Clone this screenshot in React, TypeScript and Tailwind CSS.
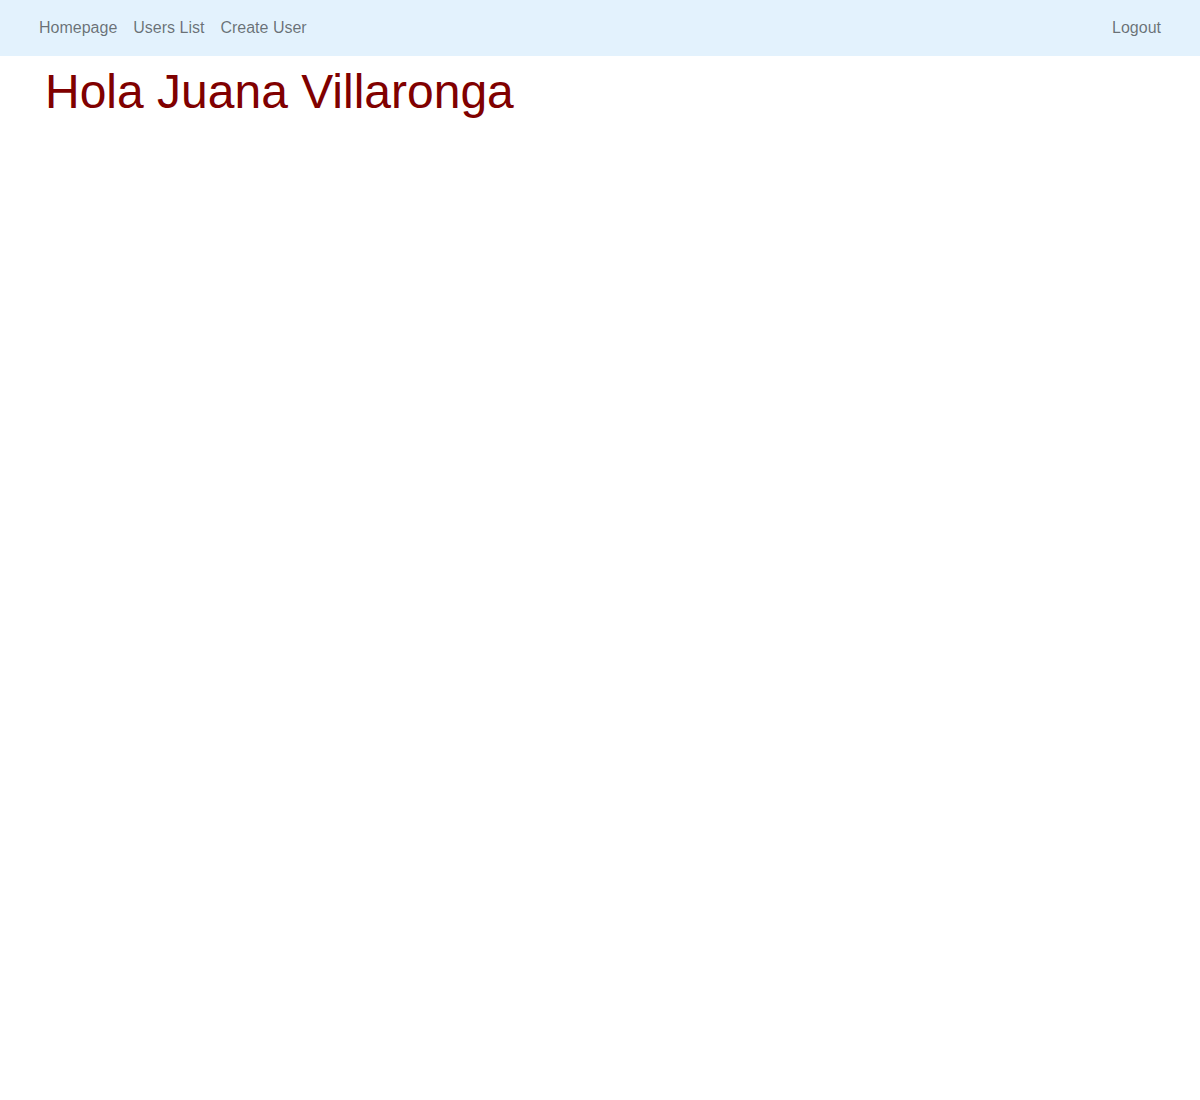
export default function App() {
  return (
    <div className="min-h-screen bg-white font-['Liberation_Sans',Arial,sans-serif]">
      <nav className="h-14 bg-[#e3f2fd] flex items-center justify-between pl-[31px] pr-[31px]">
        <ul className="flex">
          <li><a href="#" className="block px-2 text-base text-[rgba(0,0,0,0.55)]">Homepage</a></li>
          <li><a href="#" className="block px-2 text-base text-[rgba(0,0,0,0.55)]">Users List</a></li>
          <li><a href="#" className="block px-2 text-base text-[rgba(0,0,0,0.55)]">Create User</a></li>
        </ul>
        <a href="#" className="block px-2 text-base text-[rgba(0,0,0,0.55)]">Logout</a>
      </nav>
      <h1 className="mt-[7px] ml-[45px] text-5xl leading-[1.2] text-[#800000]">Hola Juana Villaronga</h1>
    </div>
  );
}
